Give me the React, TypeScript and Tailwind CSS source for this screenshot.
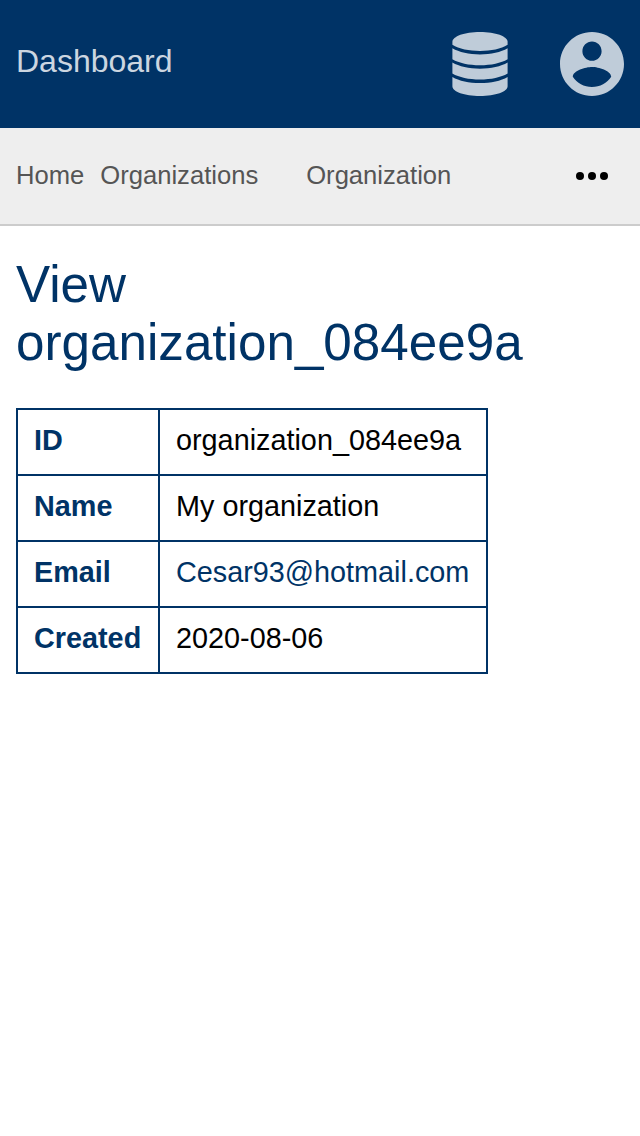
const rows = [
  { label: "ID", value: "organization_084ee9a" },
  { label: "Name", value: "My organization" },
  { label: "Email", value: "Cesar93@hotmail.com", link: true },
  { label: "Created", value: "2020-08-06" },
];

function DatabaseIcon() {
  return (
    <svg className="mr-[52px] h-16 w-14" viewBox="0 0 56 64" fill="currentColor">
      <path d="M28 0C43.5 0 55.6 4.4 55.6 9.8V12.8C49 17 39 19 28 19S7 17 .4 12.8V9.8C.4 4.4 12.5 0 28 0Z" />
      <path d="M.4 16.3C7 20.2 17 22.4 28 22.4S49 20.2 55.6 16.3V27.2C49 31.1 39 33.2 28 33.2S7 31.1 .4 27.2Z" />
      <path d="M.4 30.6C7 34.5 17 36.7 28 36.7S49 34.5 55.6 30.6V41.5C49 45.4 39 47.5 28 47.5S7 45.4 .4 41.5Z" />
      <path d="M.4 44.9C7 48.8 17 51 28 51S49 48.8 55.6 44.9V54.2C55.6 59.6 43.5 64 28 64S.4 59.6 .4 54.2Z" />
    </svg>
  );
}

function AccountIcon() {
  return (
    <svg className="size-16" viewBox="2 2 20 20" fill="currentColor">
      <path d="M12 2C6.48 2 2 6.48 2 12s4.48 10 10 10 10-4.48 10-10S17.52 2 12 2zm0 3c1.66 0 3 1.34 3 3s-1.34 3-3 3-3-1.34-3-3 1.34-3 3-3zm0 14.2c-2.5 0-4.71-1.28-6-3.22.03-1.99 4-3.08 6-3.08 1.99 0 5.97 1.09 6 3.08-1.29 1.94-3.5 3.22-6 3.22z" />
    </svg>
  );
}

export default function App() {
  return (
    <div className="min-h-screen bg-white font-['Liberation_Sans',sans-serif] text-black">
      <header className="flex h-32 items-center bg-[#003366] px-4 text-[#bfccd9]">
        <a className="mb-1.5 grow text-[32px] leading-[48px] text-[#ccd6e0]">Dashboard</a>
        <DatabaseIcon />
        <AccountIcon />
      </header>
      <nav className="flex h-[98px] items-center border-b-2 border-[#cccccc] bg-[#eeeeee] px-4 text-[25.6px] text-[#555555]">
        <a className="mr-4 pb-0.5">Home</a>
        <a className="mr-12 pb-0.5">Organizations</a>
        <a className="grow pb-0.5">Organization</a>
        <svg className="mr-4 h-2 w-8" viewBox="0 0 32 8">
          <circle cx="4" cy="4" r="4" fill="#000" />
          <circle cx="16" cy="4" r="4" fill="#000" />
          <circle cx="28" cy="4" r="4" fill="#000" />
        </svg>
      </nav>
      <main className="px-4 pt-[30px]">
        <h1 className="text-[51.2px] leading-[58px] text-[#003366]">
          View
          <br />
          organization_084ee9a
        </h1>
        <table className="mt-9 w-[472px] table-fixed border-collapse text-[28.8px] leading-[32px]">
          <tbody>
            {rows.map((row) => (
              <tr key={row.label}>
                <th className="w-[142px] border-2 border-[#003366] px-4 pt-3.5 pb-[18px] text-left font-bold text-[#003366]">{row.label}</th>
                <td className="border-2 border-[#003366] px-4 pt-3.5 pb-[18px]">
                  {row.link ? <a className="text-[#003366]">{row.value}</a> : row.value}
                </td>
              </tr>
            ))}
          </tbody>
        </table>
      </main>
    </div>
  );
}
